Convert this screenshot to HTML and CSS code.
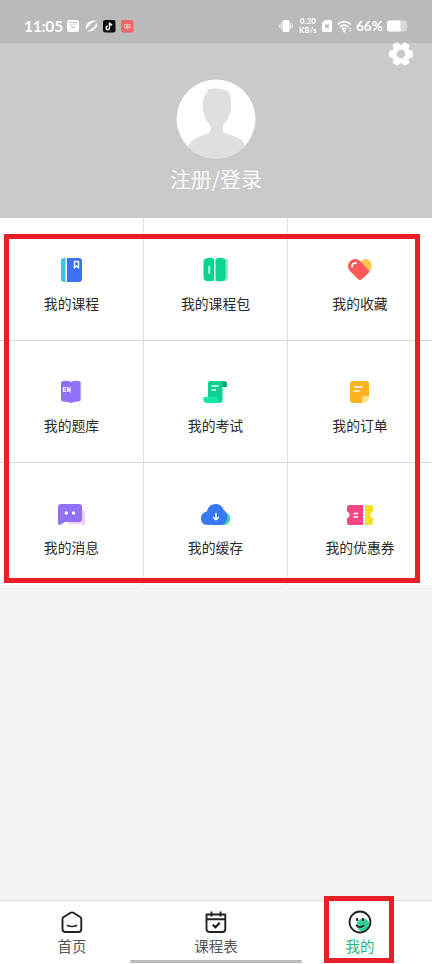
FILE: index.html
```html
<!DOCTYPE html>
<html lang="zh-CN">
<head>
<meta charset="utf-8">
<title>我的</title>
<link rel="stylesheet" href="styles.css">
</head>
<body>
<div class="screen">
  <header class="status">
    <span class="clock">11:05</span>
    <svg class="notices" width="68" height="14" viewBox="0 0 68 14">
      <rect x="0" y="1" width="12" height="12" rx="2" fill="#fff"/>
      <path d="M1.500 3.700h9" stroke="#bababa" stroke-width=".9"/>
      <path d="M2.500 5.500h7" stroke="#d5d5d5" stroke-width=".7"/>
      <path d="M4 7l2 2 2-2" fill="none" stroke="#aaa" stroke-width="1"/>
      <path d="M19 10.500C17 6 24 0 29.500 2C25 3 22 6 19 10.500ZM20 12C24 11 28 8 30 3.500C32 8 25 14 20 12Z" fill="#fff"/>
      <rect x="36" y="1" width="12.500" height="12.500" rx="2" fill="#0c0c12"/>
      <path d="M42.500 3.500v5.500a1.700 1.700 0 1 1-1.700-1.700M42.500 3.500q.4 2.200 2.700 2.300" fill="none" stroke="#fff" stroke-width="1.400"/>
      <rect x="54" y="1" width="12.500" height="12.500" rx="2" fill="#f26468"/>
      <path d="M57.500 5.500h2v3.500h-2zM61.200 5.500h2v3.500h-2zM60.300 4.500v6" fill="none" stroke="#fbd0d0" stroke-width=".8"/>
    </svg>
    <span class="spring"></span>
    <svg class="vibrate" width="14" height="12" viewBox="0 0 14 12">
      <path d="M.7 4.500v3M13.300 4.500v3M2.400 3v6M11.600 3v6" stroke="#e8e8e8" stroke-width="1.300"/>
      <rect x="3.500" y="0" width="7" height="12" rx="1.500" fill="#fff"/>
    </svg>
    <span class="speed"><b>0.20</b><b>KB/s</b></span>
    <svg class="sim" width="10" height="12" viewBox="0 0 10 12">
      <path d="M3 0H8.500Q10 0 10 1.500V10.500Q10 12 8.500 12H1.500Q0 12 0 10.500V3Z" fill="#fff"/>
      <path d="M3.200 4.500l3.600 3.600M6.800 4.500L3.200 8.100" stroke="#aaa" stroke-width="1.100"/>
    </svg>
    <svg class="wifi" width="16" height="13" viewBox="0 0 16 13">
      <path d="M.8 4.300Q7 -1 13.800 4.300M2.800 7Q7 3.300 11.500 7M5 9.300Q7.200 7.500 9.300 9.300" fill="none" stroke="#fff" stroke-width="1.700"/>
      <circle cx="7.200" cy="11.200" r="1.300" fill="#fff"/>
      <path d="M12 9l1.200-1.600L14.400 9zM12 10.300l1.200 1.600 1.200-1.600z" fill="#fff"/>
    </svg>
    <span class="percent">66%</span>
    <svg class="battery" width="22" height="12" viewBox="0 0 22 12">
      <rect x="0" y="0.500" width="20" height="11" rx="2.500" fill="#d9d9d9"/>
      <path d="M20.300 3.500q1.500 2.500 0 5z" fill="#d9d9d9"/>
      <path d="M2.500 .5H13.500V11.500H2.500Q0 11.500 0 9V3Q0 .5 2.500 .5Z" fill="#fff"/>
    </svg>
  </header>

  <section class="profile">
    <svg class="gear" width="26" height="26" viewBox="-13 -13 26 26">
      <g fill="#fff">
        <circle r="9.300"/>
        <rect x="-12" y="-3.700" width="24" height="7.400" rx="2.200"/>
        <rect x="-12" y="-3.700" width="24" height="7.400" rx="2.200" transform="rotate(60)"/>
        <rect x="-12" y="-3.700" width="24" height="7.400" rx="2.200" transform="rotate(120)"/>
      </g>
      <circle r="4.300" fill="#c9c9c9"/>
    </svg>
    <svg class="avatar" width="80" height="80" viewBox="0 0 80 80">
      <circle cx="40" cy="40" r="39.500" fill="#fff"/>
      <path d="M12 68C15 58 27 57 33 54Q36 51 34 46Q29 41 28 34Q26 32 27 29C27 21 27 16 32 13Q30 12 32 10C38 9 47 9 51 12C55 15 55 23 55 29Q56 32 54 34Q52 42 47 46Q46 51 48 54C57 57 67 58 69 67A39.500 39.500 0 0 1 12 68Z" fill="#dfdfdf"/>
    </svg>
    <a class="login">注册/登录</a>
  </section>

  <main class="menu">
    <a class="cell">
      <svg class="icon" viewBox="0 0 36 36">
        <path d="M10 6h1.500v24H10q-3-.5-3-3V9q0-3 3-3z" fill="#35c4ea"/>
        <path d="M13 6h12q3 0 3 3v18q0 3-3 3H13z" fill="#3b72f6"/>
        <path d="M20.500 9.500h4v6l-2-1.500-2 1.500z" fill="none" stroke="#fff" stroke-width="1.400"/>
      </svg>
      <span>我的课程</span>
    </a>
    <a class="cell">
      <svg class="icon" viewBox="0 0 36 36">
        <path d="M20 7l6-.7q4 0 4 3V26q0 3-4 3l-6-.5z" fill="#8decc3"/>
        <path d="M8 6.500Q12 5 16.200 7V28.500Q12 30 8 28.800 5.500 28.500 5.500 26V9Q5.500 7 8 6.500z" fill="#0bd394"/>
        <path d="M17.500 7Q22 5 25.500 6.500 27.500 7 27.500 9V26Q27.500 28.500 25 29 21 30 17.500 28.500z" fill="#0bd394"/>
        <rect x="10.300" y="13.500" width="1.800" height="8.500" rx=".9" fill="#c9fae7"/>
      </svg>
      <span>我的课程包</span>
    </a>
    <a class="cell">
      <svg class="icon" viewBox="0 0 36 36">
        <path d="M18 11C20 6 26 6 28.500 9.500Q31.500 14 28 18.500L26 20.500L17 12z" fill="#ffc751"/>
        <path d="M7.500 10C10.500 6 16 6 19 10L27 18.500Q28 19.500 26.500 21L20 27Q18 29 16 27L7.500 18.500Q4.500 14 7.500 10z" fill="#fc5958"/>
        <path d="M10 15Q9.800 11 14.200 10.800" fill="none" stroke="#fff" stroke-width="1.700" stroke-linecap="round"/>
      </svg>
      <span>我的收藏</span>
    </a>
    <a class="cell">
      <svg class="icon" viewBox="0 0 36 36">
        <path d="M24 8h3.500v19H24z" fill="#f0d3fa"/>
        <path d="M7 9Q7 7 9 7Q14 6 17 8Q21 6 25 7Q26.500 7.200 26.500 9V25.500Q26.500 27.500 24 27.500Q20 27.500 17 29Q14 27.500 9 27.500Q7 27.500 7 25.500Z" fill="#9071f8"/>
        <path d="M12.300 13.500H9.500v4h2.800M9.500 15.500h2.500M13.700 18v-4l2.300 3.500V13" fill="none" stroke="#fff" stroke-width="1.200"/>
      </svg>
      <span>我的题库</span>
    </a>
    <a class="cell">
      <svg class="icon" viewBox="0 0 36 36">
        <path d="M23 7h3q3 0 3 3v3h-5z" fill="#04a978"/>
        <path d="M12 7H26Q24.500 8 24.500 10V26Q24.500 29 21 29H10V10Q10 7 12 7z" fill="#0dd092"/>
        <path d="M5.500 23H20q0 6 3 6H9Q5.500 29 5.500 25z" fill="#13e9a7"/>
        <path d="M13.500 12h7M13.500 16h4.500" stroke="#fff" stroke-width="1.400"/>
      </svg>
      <span>我的考试</span>
    </a>
    <a class="cell">
      <svg class="icon" viewBox="0 0 36 36">
        <path d="M11 7H24.500q2.500 0 2.500 2.500V22L20.500 29H11q-3 0-3-3V10q0-3 3-3z" fill="#fbb321"/>
        <path d="M20 29v-4q0-3 3-3h4q0 7-7 7z" fill="#ffe18b"/>
        <path d="M12.500 13h7.500M12.500 17h4.500" stroke="#fff" stroke-width="1.500" stroke-linecap="round"/>
      </svg>
      <span>我的订单</span>
    </a>
    <a class="cell">
      <svg class="icon" viewBox="0 0 36 36">
        <path d="M15 14h13q3 0 3 3V30l-4-2H17q-4 0-4-3z" fill="#f3cdf4"/>
        <path d="M7 8H25q3 0 3 3V23q0 3-3 3H11L6 29Q4 29.500 4 27V11q0-3 3-3z" fill="#9071f8"/>
        <circle cx="12.300" cy="17" r="1.700" fill="#fff"/><circle cx="19.500" cy="17" r="1.700" fill="#fff"/>
      </svg>
      <span>我的消息</span>
    </a>
    <a class="cell">
      <svg class="icon" viewBox="0 0 36 36">
        <circle cx="25.500" cy="22.500" r="6.800" fill="#43d5a4"/>
        <path d="M9.500 29C5 29 3 26 3 22.500C3 18.500 5.500 16 9 15.500C10 10.500 13 8 17.500 8C22 8 24.500 10.500 25.500 13.500C30 17 30 23 28 26Q26 29 22 29Z" fill="#3879f7"/>
        <path d="M18 17v6.500M15.200 21L18 23.800 20.800 21" fill="none" stroke="#fff" stroke-width="1.500"/>
      </svg>
      <span>我的缓存</span>
    </a>
    <a class="cell">
      <svg class="icon" viewBox="0 0 36 36">
        <path d="M7.500 9H21.200V29H7.500Q5 29 5 26.500V22.500L6.500 21.500Q9 19 6.500 16.500L5 15.500V11.500Q5 9 7.500 9z" fill="#f74485"/>
        <path d="M23 9h5q3 0 3 2.500v4l-1.500 1Q27 19 29.500 21.500l1.500 1v4Q31 29 28 29h-5z" fill="#fadf22"/>
        <path d="M11.500 17.500h4.500M11.500 21h4.500" stroke="#fff" stroke-width="1.400"/>
      </svg>
      <span>我的优惠券</span>
    </a>
  </main>

  <nav class="tabs">
    <a class="tab">
      <svg class="tab-icon" viewBox="0 0 26 26">
        <path d="M4 8.500Q3.500 9 3.500 10.500V20Q3.500 23 6.500 23H19.500Q22.300 23 22.300 20V10.500Q22.300 9 21.500 8.300L14.500 3.800Q13 3 11.500 3.800Z" fill="none" stroke="#222" stroke-width="1.900"/>
        <path d="M8.500 16.500Q13 18.500 17.500 16.500" fill="none" stroke="#222" stroke-width="1.700" stroke-linecap="round"/>
      </svg>
      <span>首页</span>
    </a>
    <a class="tab">
      <svg class="tab-icon" viewBox="0 0 26 26">
        <path d="M3.500 5.500H22.300V20q0 3-3 3h-13q-2.800-.2-2.800-3zM3.500 10.300H22.300M8.500 2.500v5M17.500 2.500v5" fill="none" stroke="#222" stroke-width="1.900" stroke-linejoin="round"/>
        <path d="M9.800 15.800l2.700 2.500 4.200-4.500" fill="none" stroke="#111" stroke-width="2.100"/>
      </svg>
      <span>课程表</span>
    </a>
    <a class="tab active">
      <svg class="tab-icon" viewBox="0 0 26 26">
        <circle cx="16" cy="16" r="6.500" fill="#35cf9b"/>
        <circle cx="13" cy="13" r="10.500" fill="none" stroke="#222" stroke-width="1.800"/>
        <path d="M10 9v3M16 9v3" stroke="#222" stroke-width="1.800"/>
        <path d="M9 16.200Q13 20.200 17 16.200" fill="none" stroke="#222" stroke-width="1.700"/>
      </svg>
      <span>我的</span>
    </a>
    <i class="home-bar"></i>
  </nav>
  <i class="mark mark-menu"></i>
  <i class="mark mark-tab"></i>
</div>
</body>
</html>
```

FILE: styles.css
```css
* { box-sizing: border-box; }

body {
  margin: 0;
  font-family: "Noto Sans", "Noto Sans CJK SC", sans-serif;
}

.screen {
  position: relative;
  display: flex;
  flex-direction: column;
  width: 432px;
  height: 964px;
  overflow: hidden;
  background: #f4f4f4;
}

.status {
  display: flex;
  align-items: center;
  height: 43px;
  padding: 9px 23px 0 24px;
  background: #bababa;
  color: #fff;
}

.clock {
  width: 43px;
  font: 700 15.5px/16px Lato, sans-serif;
  letter-spacing: -0.2px;
  white-space: nowrap;
}

.spring { flex: 1; }

.speed {
  display: flex;
  flex-direction: column;
  width: 20px;
  margin: 0 4px 0 5px;
  font: 700 7.5px/9px Lato, sans-serif;
  text-align: center;
  white-space: nowrap;
  letter-spacing: 0.3px;
}

.wifi { margin-left: 5px; }

.percent {
  width: 27px;
  margin: 0 4px 0 3px;
  font: 700 13.5px/16px Lato, sans-serif;
}

.profile {
  position: relative;
  display: flex;
  flex-direction: column;
  align-items: center;
  height: 175px;
  padding-top: 36px;
  background: #cacaca;
}

.gear {
  position: absolute;
  top: -2px;
  right: 18px;
}

.login {
  margin-top: 4px;
  color: #fff;
  font: 350 21px/30px "Noto Sans CJK SC", sans-serif;
}

.menu {
  display: grid;
  grid-template-columns: repeat(3, 144px);
  grid-template-rows: 123px 122px 122px;
  background: #fff;
}

.cell {
  display: flex;
  flex-direction: column;
  align-items: center;
  justify-content: flex-end;
  padding-bottom: 27px;
  border-right: 1px solid #e1e1e1;
  border-bottom: 1px solid #d9d9d9;
  color: #2a2a2a;
  font: 13.85px/20px "Noto Sans CJK SC", sans-serif;
}

.cell:nth-child(3n) { border-right: 0; }
.cell:nth-child(n+7) { border-bottom: 0; padding-bottom: 28px; }

.icon {
  width: 36px;
  height: 36px;
  margin-bottom: 5px;
}

.tabs {
  position: relative;
  display: grid;
  grid-template-columns: repeat(3, 1fr);
  height: 64px;
  margin-top: auto;
  border-top: 1px solid #dedede;
  background: #fff;
}

.tab {
  display: flex;
  flex-direction: column;
  align-items: center;
  padding-top: 8px;
  color: #555;
  font: 14.5px/20px "Noto Sans CJK SC", sans-serif;
}

.tab-icon {
  width: 26px;
  height: 26px;
  margin-bottom: 1px;
}

.active { color: #2bb673; }

.home-bar {
  position: absolute;
  left: 130px;
  bottom: 1px;
  width: 172px;
  height: 3px;
  border-radius: 2px;
  background: #bdbdbd;
}

.mark {
  position: absolute;
  border: 5px solid #e81f27;
}

.mark-menu {
  left: 4px;
  top: 234px;
  width: 416px;
  height: 349px;
}

.mark-tab {
  left: 324px;
  top: 896px;
  width: 70px;
  height: 67px;
}
```
